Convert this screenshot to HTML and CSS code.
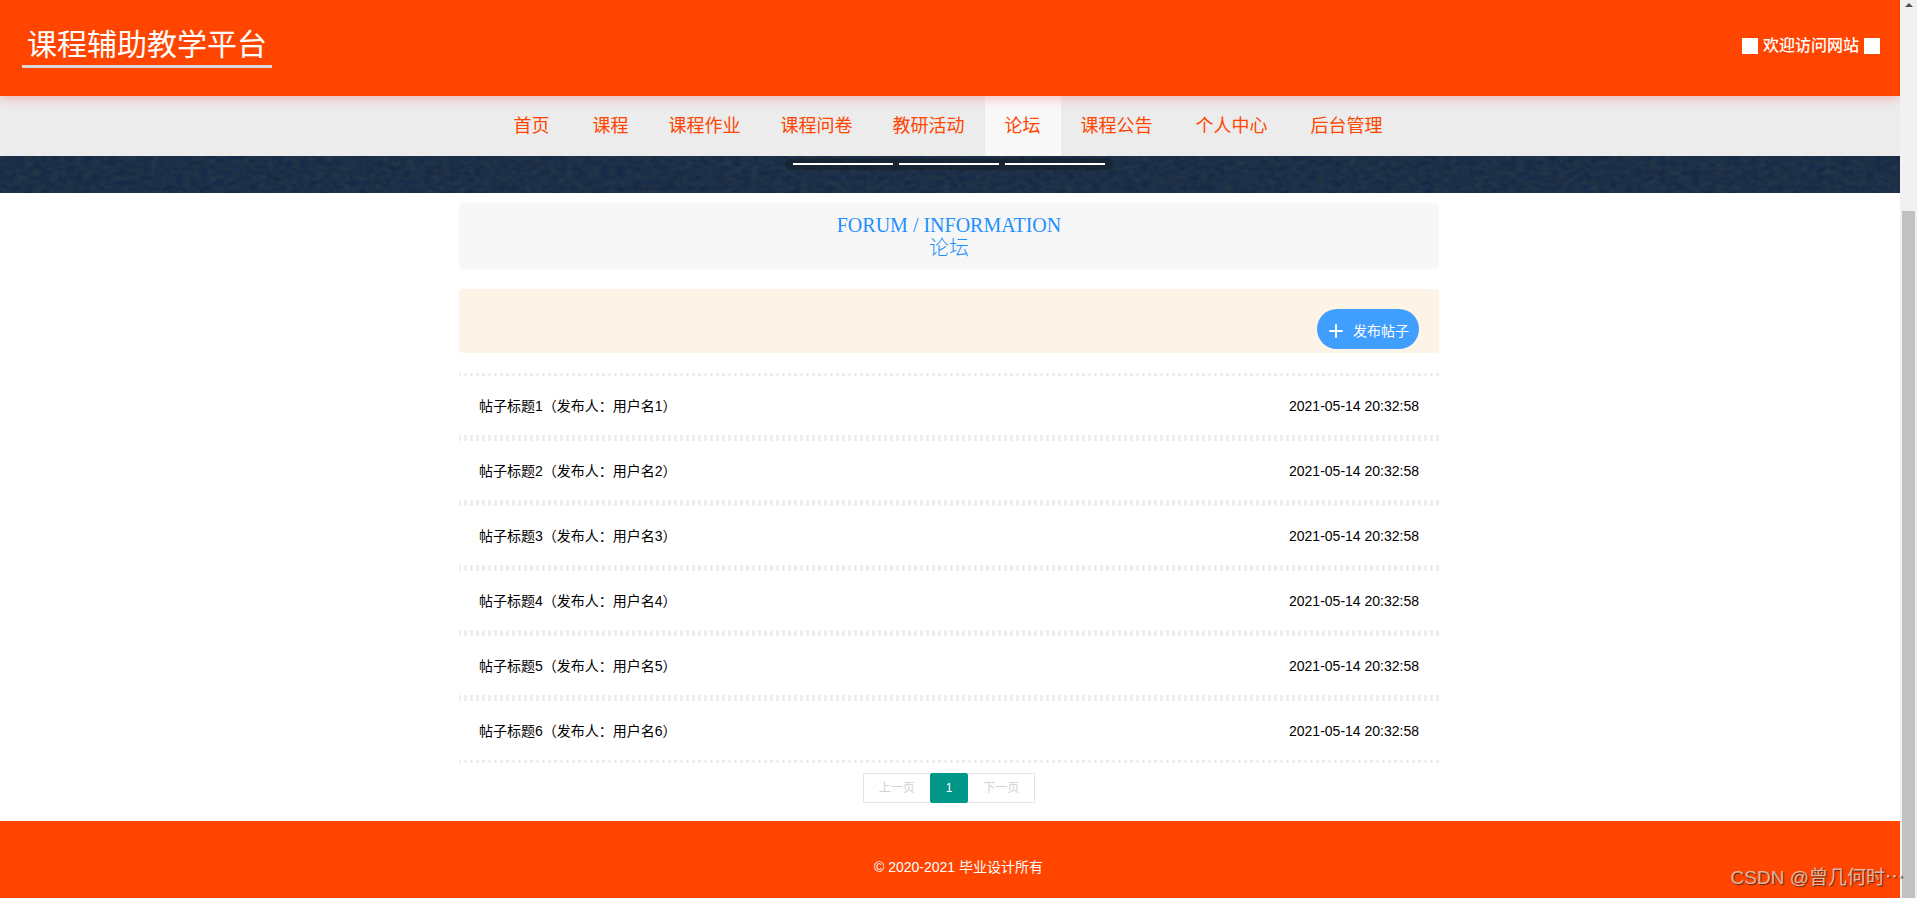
FILE: index.html
```html
<!DOCTYPE html>
<html lang="zh-CN">
<head>
<meta charset="utf-8">
<title>课程辅助教学平台</title>
<link rel="stylesheet" href="styles.css">
</head>
<body>
<div class="page">
  <header class="header">
    <div class="brand">课程辅助教学平台</div>
    <div class="welcome"><span class="block"></span><span>欢迎访问网站</span><span class="block"></span></div>
  </header>
  <nav class="nav">
    <a class="wide" href="#">首页</a>
    <a href="#">课程</a>
    <a href="#">课程作业</a>
    <a href="#">课程问卷</a>
    <a href="#">教研活动</a>
    <a class="active" href="#">论坛</a>
    <a class="wide" href="#">课程公告</a>
    <a class="wide" href="#">个人中心</a>
    <a href="#">后台管理</a>
  </nav>
  <div class="banner">
    <svg class="texture" aria-hidden="true">
      <filter id="grain" x="0" y="0" width="100%" height="100%" color-interpolation-filters="sRGB">
        <feTurbulence type="fractalNoise" baseFrequency="0.12 0.2" numOctaves="4" seed="4"/>
        <feColorMatrix values="0.1 0 0 0 0.06  0.08 0.04 0 0 0.125  0 0.06 0 0 0.25  0 0 0 0 1"/>
      </filter>
      <rect width="100%" height="100%" filter="url(#grain)"/>
    </svg>
    <div class="indicators"><span></span><span></span><span></span></div>
  </div>
  <main class="main">
    <h1 class="title"><span>FORUM / INFORMATION</span><span class="cn">论坛</span></h1>
    <div class="toolbar">
      <button class="post" type="button">
        <svg width="14" height="14" viewBox="0 0 14 14" fill="none" stroke="#fff" stroke-width="2" stroke-linecap="round" aria-hidden="true"><path d="M7 1v12M1 7h12"/></svg>
        <span>发布帖子</span>
      </button>
    </div>
    <ul class="list">
      <li><a href="#">帖子标题1（发布人：用户名1）</a><time>2021-05-14 20:32:58</time></li>
      <li><a href="#">帖子标题2（发布人：用户名2）</a><time>2021-05-14 20:32:58</time></li>
      <li><a href="#">帖子标题3（发布人：用户名3）</a><time>2021-05-14 20:32:58</time></li>
      <li><a href="#">帖子标题4（发布人：用户名4）</a><time>2021-05-14 20:32:58</time></li>
      <li><a href="#">帖子标题5（发布人：用户名5）</a><time>2021-05-14 20:32:58</time></li>
      <li><a href="#">帖子标题6（发布人：用户名6）</a><time>2021-05-14 20:32:58</time></li>
    </ul>
    <div class="pager">
      <button class="prev" type="button">上一页</button>
      <button class="current" type="button">1</button>
      <button class="next" type="button">下一页</button>
    </div>
  </main>
  <footer class="footer">© 2020-2021 毕业设计所有</footer>
</div>
<div class="scrollbar" aria-hidden="true"><span class="arrow"></span><span class="thumb"></span></div>
<div class="watermark">CSDN @曾几何时⋯</div>
</body>
</html>
```
FILE: styles.css
```css
* { box-sizing: border-box; }

body {
  margin: 0;
  min-height: 100vh;
  display: flex;
  position: relative;
  background: #fff;
  color: #000;
  font: 14px/24px "Liberation Sans", "Noto Sans CJK SC", sans-serif;
}

a { color: inherit; text-decoration: none; }

.page {
  flex: 1;
  display: flex;
  flex-direction: column;
}

.header {
  height: 96px;
  padding: 0 20px 0 22px;
  display: flex;
  align-items: center;
  justify-content: space-between;
  background: #ff4500;
  color: #fff;
  box-shadow: 0 1px 12px rgba(255, 0, 0, 0.3);
  z-index: 1;
}

.brand {
  padding: 0 5px;
  margin-top: -4px;
  border-bottom: 3px solid #d8d8d8;
  font-size: 30px;
  line-height: 41px;
}

.welcome {
  display: flex;
  align-items: center;
  gap: 5px;
  margin-top: -4px;
  font-size: 16px;
  font-weight: 500;
}

.block {
  width: 16px;
  height: 16px;
  background: #fff;
}

.nav {
  height: 60px;
  padding-right: 4px;
  display: flex;
  justify-content: center;
  background: #ececec;
  color: #ff4500;
  font-size: 18px;
  line-height: 60px;
}

.nav a { padding: 0 20px; }
.nav .wide { margin-right: 3px; }
.nav .active { background: #f8f8f8; }

.banner {
  height: 37px;
  padding: 2px 2px 0 0;
  position: relative;
  display: flex;
  justify-content: center;
  align-items: flex-start;
  background: #1b2f49;
}

.texture {
  position: absolute;
  top: 0;
  left: 0;
  width: 100%;
  height: 100%;
}

.indicators {
  position: relative;
  display: flex;
  gap: 6px;
  padding: 5px 8px;
  border-radius: 6px;
  background: rgba(20, 30, 40, 0.6);
}

.indicators span {
  width: 100px;
  height: 2px;
  background: #fff;
}

.main {
  width: 982px;
  max-width: 100%;
  margin: 0 auto;
  padding: 10px 2px 18px 0;
}

.title {
  margin: 0 0 20px;
  padding: 11px 0;
  display: flex;
  flex-direction: column;
  align-items: center;
  border-radius: 4px;
  background: #f7f7f7;
  color: #1e90ff;
  font: 400 20px/22px "Liberation Serif", serif;
}

.title .cn {
  font-family: "Noto Sans CJK SC", sans-serif;
  font-weight: 300;
}

.toolbar {
  margin-bottom: 20px;
  padding: 20px 20px 4px;
  display: flex;
  justify-content: flex-end;
  border-radius: 4px;
  background: #fef3e7;
}

.post {
  height: 40px;
  padding: 4px 10px 0 12px;
  display: flex;
  align-items: center;
  gap: 10px;
  border: 0;
  border-radius: 20px;
  background: #409eff;
  color: #fff;
  font: inherit;
}

.list {
  margin: 0 0 10px;
  padding: 0;
  list-style: none;
}

.list li {
  height: 65px;
  padding: 0 20px;
  display: flex;
  align-items: center;
  justify-content: space-between;
  background:
    repeating-linear-gradient(to left, #eee 0 3px, transparent 3px 6px) top / 100% 3px no-repeat,
    repeating-linear-gradient(to left, #eee 0 3px, transparent 3px 6px) bottom / 100% 3px no-repeat;
}

.pager {
  display: flex;
  justify-content: center;
}

.pager button {
  height: 30px;
  padding: 0 15px;
  border: 1px solid #e2e2e2;
  background: #fff;
  color: #d2d2d2;
  font: 12px/28px "Liberation Sans", "Noto Sans CJK SC", sans-serif;
}

.pager .prev { border-right: 0; border-radius: 2px 0 0 2px; }
.pager .next { border-left: 0; border-radius: 0 2px 2px 0; }

.pager .current {
  border-color: #009688;
  border-radius: 2px;
  background: #009688;
  color: #fff;
}

.footer {
  flex: 1;
  padding: 34px 0 19px 17px;
  background: #ff4500;
  color: #fff;
  text-align: center;
}

.scrollbar {
  width: 17px;
  padding: 3px 2px 0;
  display: flex;
  flex-direction: column;
  align-items: center;
  background: #f1f1f1;
  z-index: 2;
}

.arrow {
  border: 4px solid transparent;
  border-top: 0;
  border-bottom: 4px solid #505050;
}

.thumb {
  flex: 1;
  width: 13px;
  margin-top: 204px;
  background: #c1c1c1;
}

.watermark {
  position: absolute;
  right: 13px;
  bottom: 8px;
  z-index: 3;
  color: rgba(235, 225, 215, 0.75);
  font: 19px/24px "Liberation Sans", "Noto Sans CJK SC", sans-serif;
  text-shadow: 1px 1px 1px rgba(60, 30, 20, 0.8);
}
```
